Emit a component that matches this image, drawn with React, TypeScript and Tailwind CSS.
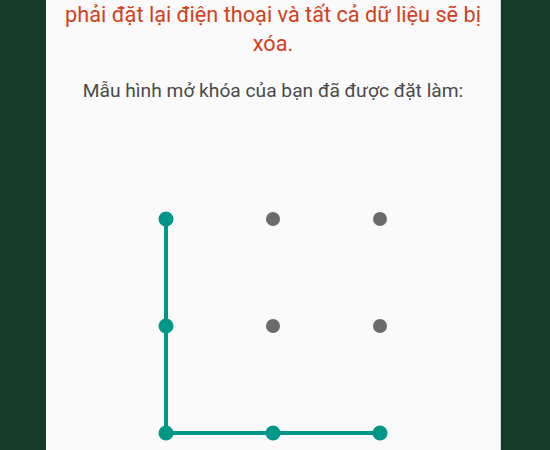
const ON = "#009688";
const OFF = "#6b6b6b";

// lưới 3x3, vị trí tính theo khoảng cách 107px
const STEP = 107;
const PAD = 20;
const pos = (i: number) => PAD + i * STEP;

// thứ tự nối: cột trái từ trên xuống rồi sang phải theo hàng dưới
const path = [
  [0, 0],
  [0, 1],
  [0, 2],
  [1, 2],
  [2, 2],
];

function PatternGrid() {
  const size = PAD * 2 + STEP * 2;
  const active = new Set(path.map(([c, r]) => `${c}-${r}`));
  const points = path.map(([c, r]) => `${pos(c)},${pos(r)}`).join(" ");

  return (
    <svg width={size} height={size} viewBox={`0 0 ${size} ${size}`} className="block">
      <polyline points={points} fill="none" stroke={ON} strokeWidth={4} strokeLinejoin="round" />
      {[0, 1, 2].map(r =>
        [0, 1, 2].map(c => {
          const on = active.has(`${c}-${r}`);
          return (
            <circle
              key={`${c}-${r}`}
              cx={pos(c)}
              cy={pos(r)}
              r={on ? 7.5 : 7}
              fill={on ? ON : OFF}
            />
          );
        })
      )}
    </svg>
  );
}

export default function App() {
  return (
    <div className="h-[450px] w-[550px] overflow-hidden bg-[#143a28] font-['Roboto',sans-serif]">
      <div className="ml-[46px] flex h-full w-[455px] flex-col items-center border-r border-[#cfd6d2] bg-[#fafafa]">
        <p className="text-center text-[21.7px] leading-[29px] text-[#d2401a]">
          phải đặt lại điện thoại và tất cả dữ liệu sẽ bị
          <br />
          xóa.
        </p>
        <p className="mt-[18px] text-center text-[19.2px] leading-[29px] text-[#4a4a4a]">
          Mẫu hình mở khóa của bạn đã được đặt làm:
        </p>
        <div className="mt-[94px]">
          <PatternGrid />
        </div>
      </div>
    </div>
  );
}
